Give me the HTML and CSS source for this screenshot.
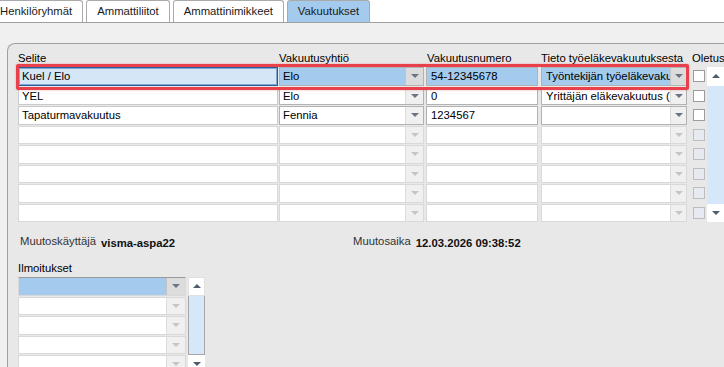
FILE: index.html
```html
<!DOCTYPE html>
<html lang="fi">
<head>
    <meta charset="UTF-8">
    <title>Vakuutukset</title>
    <link rel="stylesheet" href="styles.css">
</head>
<body>
    <div class="tabs">
        <div class="tab">Henkilöryhmät</div>
        <div class="tab">Ammattiliitot</div>
        <div class="tab">Ammattinimikkeet</div>
        <div class="tab active">Vakuutukset</div>
    </div>

    <div class="content">
        <div class="panel">
            <div class="table">
                <div class="hdr">Selite</div>
                <div class="hdr">Vakuutusyhtiö</div>
                <div class="hdr pad">Vakuutusnumero</div>
                <div class="hdr">Tieto työeläkevakuutuksesta</div>
                <div class="hdr pad">Oletus</div>

                <!-- rivi 1 (valittu) -->
                <div class="cell c1 focus">Kuel / Elo</div>
                <div class="sel c2 filled picked"><span class="txt">Elo</span><span class="btn dark"><i class="arr"></i></span></div>
                <div class="cell c3 filled picked">54-12345678</div>
                <div class="sel c4 filled picked"><span class="txt">Työntekijän työeläkevakuutus</span><span class="btn dark"><i class="arr"></i></span></div>
                <div class="c5"><div class="chk"></div></div>

                <!-- rivi 2 -->
                <div class="cell c1 filled">YEL</div>
                <div class="sel c2 filled"><span class="txt">Elo</span><span class="btn dark"><i class="arr"></i></span></div>
                <div class="cell c3 filled">0</div>
                <div class="sel c4 filled"><span class="txt">Yrittäjän eläkevakuutus (YEL)</span><span class="btn dark"><i class="arr"></i></span></div>
                <div class="c5"><div class="chk"></div></div>

                <!-- rivi 3 -->
                <div class="cell c1 filled">Tapaturmavakuutus</div>
                <div class="sel c2 filled"><span class="txt">Fennia</span><span class="btn dark"><i class="arr"></i></span></div>
                <div class="cell c3 filled">1234567</div>
                <div class="sel c4 filled"><span class="txt"></span><span class="btn dark"><i class="arr"></i></span></div>
                <div class="c5"><div class="chk"></div></div>

                <!-- tyhjät rivit -->
                <div class="cell c1"></div>
                <div class="sel c2"><span class="txt"></span><span class="btn"><i class="arr"></i></span></div>
                <div class="cell c3"></div>
                <div class="sel c4"><span class="txt"></span><span class="btn"><i class="arr"></i></span></div>
                <div class="c5"><div class="chk off"></div></div>

                <div class="cell c1"></div>
                <div class="sel c2"><span class="txt"></span><span class="btn"><i class="arr"></i></span></div>
                <div class="cell c3"></div>
                <div class="sel c4"><span class="txt"></span><span class="btn"><i class="arr"></i></span></div>
                <div class="c5"><div class="chk off"></div></div>

                <div class="cell c1"></div>
                <div class="sel c2"><span class="txt"></span><span class="btn"><i class="arr"></i></span></div>
                <div class="cell c3"></div>
                <div class="sel c4"><span class="txt"></span><span class="btn"><i class="arr"></i></span></div>
                <div class="c5"><div class="chk off"></div></div>

                <div class="cell c1"></div>
                <div class="sel c2"><span class="txt"></span><span class="btn"><i class="arr"></i></span></div>
                <div class="cell c3"></div>
                <div class="sel c4"><span class="txt"></span><span class="btn"><i class="arr"></i></span></div>
                <div class="c5"><div class="chk off"></div></div>

                <div class="cell c1"></div>
                <div class="sel c2"><span class="txt"></span><span class="btn"><i class="arr"></i></span></div>
                <div class="cell c3"></div>
                <div class="sel c4"><span class="txt"></span><span class="btn"><i class="arr"></i></span></div>
                <div class="c5"><div class="chk off"></div></div>

                <div class="vscroll main">
                    <div class="sb-btn"><i class="up"></i></div>
                    <div class="sb-track"></div>
                    <div class="sb-btn"><i class="down"></i></div>
                </div>

                <div class="highlight"></div>
            </div>

            <div class="info">
                <div class="pair first"><span class="lbl">Muutoskäyttäjä</span><b>visma-aspa22</b></div>
                <div class="pair"><span class="lbl">Muutosaika</span><b>12.03.2026 09:38:52</b></div>
            </div>

            <div class="ilm-label">Ilmoitukset</div>
            <div class="ilm">
                <div class="sel picked top"><span class="txt"></span><span class="btn dark"><i class="arr"></i></span></div>
                <div class="sel"><span class="txt"></span><span class="btn"><i class="arr"></i></span></div>
                <div class="sel"><span class="txt"></span><span class="btn"><i class="arr"></i></span></div>
                <div class="sel"><span class="txt"></span><span class="btn"><i class="arr"></i></span></div>
                <div class="sel"><span class="txt"></span><span class="btn"><i class="arr"></i></span></div>

                <div class="vscroll small">
                    <div class="sb-btn"><i class="up"></i></div>
                    <div class="sb-track"></div>
                    <div class="sb-btn"><i class="down"></i></div>
                </div>
            </div>
        </div>
    </div>
</body>
</html>
```

FILE: styles.css
```css
body {
    margin: 0;
    height: 367px;
    overflow: hidden;
    font-family: "Liberation Sans", Arial, sans-serif;
    font-size: 11.3px;
    color: #111;
    background-color: #f0f0f0;
}

/* välilehdet */
.tabs {
    display: flex;
    height: 22px;
    margin-left: -11px;
    background-color: #fff;
    border-bottom: 1px solid #a0a0a0;
}
.tab {
    padding: 0 10px;
    line-height: 21px;
    margin-right: 3px;
    border: 1px solid #aaa;
    border-bottom: none;
    border-radius: 3px 3px 0 0;
    background-color: #fff;
    color: #1a1a1a;
    white-space: nowrap;
}
.tab.active {
    background-color: #a4caed;
}

.content {
    padding: 20px 0 0 7px;
}
.panel {
    height: 330px;
    padding: 4px 0 0 10px;
    border-top: 1px solid #a0a0a0;
    border-left: 1px solid #a0a0a0;
    border-top-left-radius: 8px;
    background-color: #e8e8e8;
}

/* taulukko */
.table {
    position: relative;
    display: grid;
    grid-template-columns: 261px 147px 115px 150px 16px 17px;
    grid-template-rows: 18px repeat(8, 18.5px);
    row-gap: 1px;
}
.hdr {
    line-height: 20px;
    white-space: nowrap;
    color: #000;
}
.hdr.pad {
    padding-left: 1px;
}
.cell, .sel {
    box-sizing: border-box;
    height: 18.5px;
    line-height: 16.5px;
    border: 1px solid #d9d9d9;
    background-color: #fff;
    white-space: nowrap;
    overflow: hidden;
    color: #000;
}
.cell {
    padding-left: 3px;
}
.sel {
    display: flex;
}
.sel .txt {
    flex: 1;
    padding-left: 3px;
    overflow: hidden;
}
.sel .btn {
    width: 17px;
    flex: none;
    display: flex;
    align-items: center;
    justify-content: center;
    border-left: 1px solid #dcdcdc;
    background-color: #f0f0f0;
}
.c1 { grid-column: 1; width: 260px; }
.c2 { width: 145px; }
.c3 { width: 112px; padding-left: 4px; }
.c4 { width: 146px; }
.c4 .btn { width: 15px; }
.c4 .txt { padding-left: 4px; }

.filled {
    border-color: #b2b2b2;
}
.c1.filled {
    border-color: #cacaca;
}
.picked {
    background-color: #a4caed;
}
.picked .btn {
    background-color: #dcdcdc;
    border-left-color: #c4c4c4;
}
.focus {
    border: 1px solid #2c5b97;
    box-shadow: inset 0 0 0 1px #7fa7d4;
    background-color: #d5e6f6;
}

.arr {
    width: 0;
    height: 0;
    border-left: 4px solid transparent;
    border-right: 4px solid transparent;
    border-top: 4px solid #c6c6c6;
}
.dark .arr {
    border-top-color: #6b7482;
}

.chk {
    box-sizing: border-box;
    width: 12px;
    height: 12px;
    margin: 3px 0 0 2px;
    border: 1px solid #9c9c9c;
    background-color: #fff;
}
.chk.off {
    border-color: #bdbdbd;
    background-color: #e7eaf0;
}

/* vierityspalkit */
.vscroll {
    display: flex;
    flex-direction: column;
}
.vscroll.main {
    grid-column: 6;
    grid-row: 2 / span 8;
}
.sb-btn {
    height: 18.5px;
    flex: none;
    display: flex;
    align-items: center;
    justify-content: center;
    background-color: #fff;
}
.sb-track {
    flex: 1;
    background-color: #d5e7f8;
}
.up, .down {
    width: 0;
    height: 0;
    border-left: 4px solid transparent;
    border-right: 4px solid transparent;
}
.up {
    border-bottom: 4px solid #505c6e;
}
.down {
    border-top: 4px solid #505c6e;
}

/* punainen korostus rivin päällä */
.highlight {
    position: absolute;
    left: -2px;
    top: 16px;
    width: 673px;
    height: 26px;
    box-sizing: border-box;
    border: 3px solid #e8414b;
    border-radius: 2px;
    box-shadow: 0 0 2px rgba(232, 65, 75, 0.5);
    pointer-events: none;
}

/* muutostiedot */
.info {
    display: flex;
    margin-top: 11px;
    line-height: 16px;
}
.pair {
    white-space: nowrap;
}
.pair.first {
    width: 333px;
    padding-left: 2px;
}
.lbl {
    vertical-align: 2px;
    color: #333;
    margin-right: 5px;
}
.pair b {
    color: #111;
}

.ilm-label {
    margin-top: 9px;
    line-height: 16px;
    color: #000;
}
.ilm {
    display: grid;
    grid-template-columns: 170px 17px;
    grid-template-rows: repeat(5, 18.5px);
    row-gap: 1px;
    margin-top: 1px;
}
.ilm .sel {
    grid-column: 1;
    width: 168px;
}
.ilm .sel .btn {
    width: 18px;
}
.ilm .sel.top {
    border-top-color: #9a9a9a;
}
.vscroll.small {
    grid-column: 2;
    grid-row: 1 / span 5;
}
.vscroll.small .sb-track {
    border: 1px solid #a6a6a6;
    border-top: none;
}
.vscroll.small .sb-btn:first-child {
    border: 1px solid #e0e0e0;
    box-sizing: border-box;
}
```
